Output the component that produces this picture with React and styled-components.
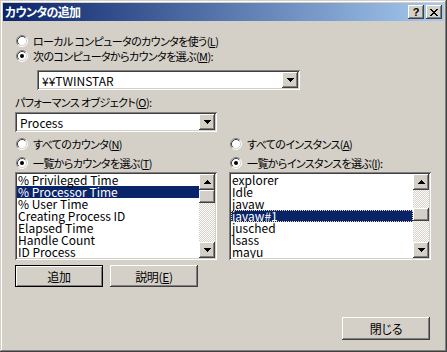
import React from 'react';
import styled, { createGlobalStyle, css } from 'styled-components';

const Face = '#D4D0C8';
const Shadow = '#808080';
const DarkShadow = '#404040';
const Highlight = '#FFFFFF';
const Navy = '#0A246A';

const GlobalStyle = createGlobalStyle`
  html, body {
    margin: 0;
    padding: 0;
    background: ${Face};
  }
  body {
    font-family: "Noto Sans CJK JP", "Noto Sans", sans-serif;
    font-size: 12px;
    color: #000;
    font-feature-settings: "palt";
  }
`;

const raised = css`
  background: ${Face};
  box-shadow: inset -1px -1px ${DarkShadow}, inset 1px 1px ${Highlight},
    inset -2px -2px ${Shadow}, inset 2px 2px ${Face};
`;

const sunken = css`
  background: ${Highlight};
  box-shadow: inset 1px 1px ${Shadow}, inset -1px -1px ${Highlight},
    inset 2px 2px ${DarkShadow}, inset -2px -2px ${Face};
`;

// narrow the CJK labels towards the old bitmap UI font
const labelText = css`
  font-size: 11px;
  letter-spacing: -0.6px;
`;

const Window = styled.div`
  width: 447px;
  height: 352px;
  box-sizing: border-box;
  padding: 3px;
  display: flex;
  flex-direction: column;
  background: ${Face};
  box-shadow: inset -1px -1px ${DarkShadow}, inset 1px 1px ${Face},
    inset -2px -2px ${Shadow}, inset 2px 2px ${Highlight};
`;

const TitleBar = styled.div`
  height: 18px;
  display: flex;
  align-items: center;
  justify-content: space-between;
  padding: 0 2px 0 2px;
  background: linear-gradient(to right, ${Navy}, #a6caf0);
`;

const TitleText = styled.span`
  color: #fff;
  font-weight: bold;
  font-size: 12px;
  letter-spacing: -0.7px;
  line-height: 18px;
`;

const CaptionButtons = styled.div`
  display: flex;
  gap: 2px;
`;

const CaptionButton = styled.div`
  ${raised};
  width: 16px;
  height: 14px;
  display: flex;
  align-items: center;
  justify-content: center;
  font-family: "Liberation Sans", sans-serif;
  font-weight: bold;
  font-size: 11px;
  line-height: 14px;
`;

const Body = styled.div`
  flex: 1;
  display: flex;
  flex-direction: column;
  padding: 12px 14px 0 12px;
`;

const RadioRow = styled.div`
  height: 15px;
  display: flex;
  align-items: center;
  gap: 5px;
  padding-left: 1px;
  white-space: nowrap;
  margin-top: ${p => p.$gap || 0}px;
`;

const RadioLabel = styled.span`
  ${labelText};
`;

const Caption = styled.div`
  ${labelText};
  height: 15px;
  line-height: 15px;
  white-space: nowrap;
  margin-top: ${p => p.$gap || 0}px;
`;

const Field = styled.div`
  ${sunken};
  box-sizing: border-box;
  height: 20px;
  width: ${p => p.$width}px;
  margin-top: ${p => p.$gap || 0}px;
  margin-left: ${p => p.$indent || 0}px;
  padding: 2px;
  display: flex;
  align-items: center;
`;

const FieldText = styled.span`
  flex: 1;
  padding-left: ${p => p.$pad || 3}px;
  white-space: nowrap;
`;

const DropButton = styled.div`
  ${raised};
  width: 16px;
  height: 16px;
  display: flex;
  align-items: center;
  justify-content: center;
`;

const Columns = styled.div`
  display: grid;
  grid-template-columns: 202px 202px;
  column-gap: 12px;
  margin-top: 4px;
`;

const Column = styled.div`
  display: flex;
  flex-direction: column;
`;

const ListBox = styled.div`
  ${sunken};
  box-sizing: border-box;
  height: 88px;
  margin-top: 2px;
  padding: 2px;
  display: flex;
`;

const Items = styled.div`
  flex: 1;
  overflow: hidden;
`;

const Item = styled.div`
  height: 12px;
  line-height: 12px;
  padding-left: 1px;
  white-space: nowrap;
  box-sizing: border-box;
  ${p =>
    p.$selected &&
    css`
      background: ${Navy};
      color: #fff;
    `}
  ${p =>
    p.$focused &&
    css`
      outline: 1px dotted #f5db95;
      outline-offset: -1px;
    `}
`;

const ScrollBar = styled.div`
  width: 16px;
  display: flex;
  flex-direction: column;
`;

const ScrollButton = styled.div`
  ${raised};
  width: 16px;
  height: 16px;
  display: flex;
  align-items: center;
  justify-content: center;
`;

const Track = styled.div`
  flex: 1;
  padding-top: ${p => p.$offset}px;
  background: repeating-conic-gradient(#ffffff 0 25%, ${Face} 0 50%) 0 0 / 2px 2px;
`;

const Thumb = styled.div`
  ${raised};
  height: 13px;
`;

const ButtonRow = styled.div`
  display: flex;
  gap: 7px;
  margin-top: 5px;
`;

const PushButton = styled.div`
  box-sizing: border-box;
  width: 88px;
  height: ${p => p.$height || 22}px;
  display: flex;
  align-items: center;
  justify-content: center;
  white-space: nowrap;
  letter-spacing: -0.3px;
  ${p =>
    p.$default
      ? css`
          background: ${Face};
          border: 1px solid #000;
          box-shadow: inset 1px 1px ${Highlight}, inset -1px -1px ${Shadow};
        `
      : raised}
`;

const Footer = styled.div`
  display: flex;
  justify-content: flex-end;
  margin-top: 30px;
`;

function Arrow({ down }) {
  const rows = [1, 3, 5, 7];
  const list = down ? [...rows].reverse() : rows;
  return (
    <svg width="7" height="4" shapeRendering="crispEdges">
      {list.map((w, i) => (
        <rect key={i} x={(7 - w) / 2} y={i} width={w} height="1" fill="#000" />
      ))}
    </svg>
  );
}

function CloseGlyph() {
  const cells = [
    [0, 0], [1, 0], [6, 0], [7, 0],
    [1, 1], [2, 1], [5, 1], [6, 1],
    [2, 2], [3, 2], [4, 2], [5, 2],
    [3, 3], [4, 3],
    [2, 4], [3, 4], [4, 4], [5, 4],
    [1, 5], [2, 5], [5, 5], [6, 5],
    [0, 6], [1, 6], [6, 6], [7, 6],
  ];
  return (
    <svg width="8" height="7" shapeRendering="crispEdges">
      {cells.map(([x, y]) => (
        <rect key={`${x}-${y}`} x={x} y={y} width="1" height="1" fill="#000" />
      ))}
    </svg>
  );
}

function RadioMark({ checked }) {
  return (
    <svg width="12" height="12" viewBox="0 0 12 12">
      <circle cx="6" cy="6" r="5" fill="#fff" />
      <path d="M2.11 9.89 A5.5 5.5 0 0 1 9.89 2.11" fill="none" stroke={Shadow} />
      <path d="M9.89 2.11 A5.5 5.5 0 0 1 2.11 9.89" fill="none" stroke={Highlight} />
      <path d="M2.82 9.18 A4.5 4.5 0 0 1 9.18 2.82" fill="none" stroke={DarkShadow} />
      <path d="M9.18 2.82 A4.5 4.5 0 0 1 2.82 9.18" fill="none" stroke={Face} />
      {checked && <circle cx="6" cy="6" r="2" fill="#000" />}
    </svg>
  );
}

function Radio({ checked, gap, children }) {
  return (
    <RadioRow $gap={gap}>
      <RadioMark checked={checked} />
      <RadioLabel>{children}</RadioLabel>
    </RadioRow>
  );
}

function List({ items, selected, focused, thumb }) {
  return (
    <ListBox>
      <Items>
        {items.map((name, i) => (
          <Item key={name} $selected={i === selected} $focused={i === focused}>
            {name}
          </Item>
        ))}
      </Items>
      <ScrollBar>
        <ScrollButton>
          <Arrow />
        </ScrollButton>
        <Track $offset={thumb}>
          <Thumb />
        </Track>
        <ScrollButton>
          <Arrow down />
        </ScrollButton>
      </ScrollBar>
    </ListBox>
  );
}

const counters = [
  '% Privileged Time',
  '% Processor Time',
  '% User Time',
  'Creating Process ID',
  'Elapsed Time',
  'Handle Count',
  'ID Process',
];

const instances = ['explorer', 'Idle', 'javaw', 'javaw#1', 'jusched', 'lsass', 'mayu'];

export default function App() {
  return (
    <>
      <GlobalStyle />
      <Window>
        <TitleBar>
          <TitleText>カウンタの追加</TitleText>
          <CaptionButtons>
            <CaptionButton>?</CaptionButton>
            <CaptionButton>
              <CloseGlyph />
            </CaptionButton>
          </CaptionButtons>
        </TitleBar>
        <Body>
          <Radio>
            ローカル コンピュータのカウンタを使う(<u>L</u>)
          </Radio>
          <Radio checked>
            次のコンピュータからカウンタを選ぶ(<u>M</u>):
          </Radio>
          <Field $width={263} $gap={7} $indent={22}>
            <FieldText>¥¥TWINSTAR</FieldText>
            <DropButton>
              <Arrow down />
            </DropButton>
          </Field>
          <Caption $gap={5}>
            パフォーマンス オブジェクト(<u>O</u>):
          </Caption>
          <Field $width={202} $gap={2}>
            <FieldText>Process</FieldText>
            <DropButton>
              <Arrow down />
            </DropButton>
          </Field>
          <Columns>
            <Column>
              <Radio>
                すべてのカウンタ(<u>N</u>)
              </Radio>
              <Radio checked gap={4}>
                一覧からカウンタを選ぶ(<u>T</u>)
              </Radio>
              <List items={counters} selected={1} thumb={0} />
            </Column>
            <Column>
              <Radio>
                すべてのインスタンス(<u>A</u>)
              </Radio>
              <Radio checked gap={4}>
                一覧からインスタンスを選ぶ(<u>I</u>):
              </Radio>
              <List items={instances} selected={3} focused={3} thumb={18} />
            </Column>
          </Columns>
          <ButtonRow>
            <PushButton $default>追加</PushButton>
            <PushButton>
              説明(<u>E</u>)
            </PushButton>
          </ButtonRow>
          <Footer>
            <PushButton $height={23}>閉じる</PushButton>
          </Footer>
        </Body>
      </Window>
    </>
  );
}
